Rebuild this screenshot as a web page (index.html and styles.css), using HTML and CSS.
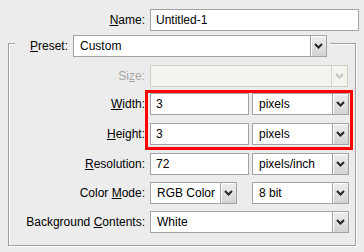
FILE: index.html
```html
<!DOCTYPE html>
<html lang="en">
<head>
    <meta charset="UTF-8">
    <title>New</title>
    <link rel="stylesheet" href="styles.css">
</head>
<body>
    <div class="dialog">
        <!-- Name -->
        <div class="row name-row">
            <label class="label" for="docName"><u>N</u>ame:</label>
            <input class="field field-name" type="text" id="docName" value="Untitled-1">
        </div>

        <!-- Image settings group -->
        <fieldset class="group">
            <legend class="preset">
                <div class="row">
                    <label class="preset-label"><u>P</u>reset:</label>
                    <div class="select select-preset">
                        <span class="value">Custom</span>
                        <span class="drop"><svg class="chev" width="9" height="6" viewBox="0 0 9 6"><path d="M1 1l3.5 3.5L8 1" /></svg></span>
                    </div>
                </div>
            </legend>

            <div class="row">
                <label class="label is-disabled">Si<u>z</u>e:</label>
                <div class="select select-size is-disabled">
                    <span class="value"></span>
                    <span class="drop"><svg class="chev" width="9" height="6" viewBox="0 0 9 6"><path d="M1 1l3.5 3.5L8 1" /></svg></span>
                </div>
            </div>

            <div class="dims">
                <div class="dims-labels">
                    <label class="dims-label" for="width"><u>W</u>idth:</label>
                    <label class="dims-label" for="height"><u>H</u>eight:</label>
                </div>
                <div class="highlight">
                    <div class="row">
                        <input class="field field-num" type="text" id="width" value="3">
                        <div class="select select-unit">
                            <span class="value">pixels</span>
                            <span class="drop"><svg class="chev" width="9" height="6" viewBox="0 0 9 6"><path d="M1 1l3.5 3.5L8 1" /></svg></span>
                        </div>
                    </div>
                    <div class="row">
                        <input class="field field-num" type="text" id="height" value="3">
                        <div class="select select-unit">
                            <span class="value">pixels</span>
                            <span class="drop"><svg class="chev" width="9" height="6" viewBox="0 0 9 6"><path d="M1 1l3.5 3.5L8 1" /></svg></span>
                        </div>
                    </div>
                </div>
            </div>

            <div class="row row-res">
                <label class="label" for="resolution"><u>R</u>esolution:</label>
                <input class="field field-num" type="text" id="resolution" value="72">
                <div class="select select-unit">
                    <span class="value">pixels/inch</span>
                    <span class="drop"><svg class="chev" width="9" height="6" viewBox="0 0 9 6"><path d="M1 1l3.5 3.5L8 1" /></svg></span>
                </div>
            </div>

            <div class="row row-next">
                <label class="label">Color <u>M</u>ode:</label>
                <div class="select select-mode">
                    <span class="value">RGB Color</span>
                    <span class="drop"><svg class="chev" width="9" height="6" viewBox="0 0 9 6"><path d="M1 1l3.5 3.5L8 1" /></svg></span>
                </div>
                <div class="select select-bits">
                    <span class="value">8 bit</span>
                    <span class="drop"><svg class="chev" width="9" height="6" viewBox="0 0 9 6"><path d="M1 1l3.5 3.5L8 1" /></svg></span>
                </div>
            </div>

            <div class="row row-next">
                <label class="label">Background <u>C</u>ontents:</label>
                <div class="select select-bg">
                    <span class="value">White</span>
                    <span class="drop"><svg class="chev" width="9" height="6" viewBox="0 0 9 6"><path d="M1 1l3.5 3.5L8 1" /></svg></span>
                </div>
            </div>
        </fieldset>
    </div>
</body>
</html>
```

FILE: styles.css
```css
body {
    margin: 0;
    background-color: #ececec;
    font-family: "Liberation Sans", Arial, sans-serif;
    font-size: 12px;
    color: #000;
}
.dialog {
    width: 364px;
    height: 252px;
    padding-top: 9px;
    box-sizing: border-box;
    overflow: hidden;
}
.row {
    display: flex;
    align-items: center;
    height: 22px;
}
.label {
    width: 130px;
    margin-right: 5px;
    text-align: right;
    white-space: nowrap;
}
.is-disabled.label {
    color: #a6a6a6;
}
.name-row {
    margin-left: 15px;
}

/* text boxes */
.field {
    box-sizing: border-box;
    height: 22px;
    margin: 0;
    padding: 0 5px;
    border: 1px solid #a3a3a3;
    background-color: #fff;
    font: inherit;
    color: #000;
    outline: none;
}
.field-name {
    width: 209px;
}
.field-num {
    width: 99px;
}

/* group box */
.group {
    width: 348px;
    box-sizing: border-box;
    margin: -1px 0 0 8px;
    padding: 8px 0 12px 6px;
    min-width: 0;
    border: 1px solid #a0a0a0;
    box-shadow: 1px 1px 0 #fff, inset 1px 1px 0 #fff;
}
.preset {
    padding: 5px 3px 0 15px;
    background-color: #ececec;
}
.preset-label {
    margin-right: 5px;
    white-space: nowrap;
}

/* drop-down lists */
.select {
    box-sizing: border-box;
    height: 22px;
    display: flex;
    align-items: stretch;
    border: 1px solid #a3a3a3;
    background-color: #fff;
}
.select .value {
    flex: 1;
    padding-left: 6px;
    line-height: 20px;
    white-space: nowrap;
    overflow: hidden;
}
.select .drop {
    width: 16px;
    box-sizing: border-box;
    display: flex;
    align-items: center;
    justify-content: center;
    border-left: 1px solid #a0a0a0;
    background: linear-gradient(#eeeeee, #d3d3d3);
    box-shadow: inset 1px 1px 0 #fff;
}
.chev path {
    fill: none;
    stroke: #262626;
    stroke-width: 2;
}
.select.is-disabled {
    border-color: #cfcfc5;
    background-color: #f4f3ee;
}
.select.is-disabled .drop {
    border-left-color: #d6d6cc;
    background: #f4f3ee;
    box-shadow: none;
}
.select.is-disabled .chev path {
    stroke: #c4c4c0;
}
.select-preset {
    width: 254px;
}
.select-size {
    width: 198px;
}
.select-unit {
    width: 97px;
    margin-left: 3px;
}
.select-mode {
    width: 87px;
}
.select-bits {
    width: 97px;
    margin-left: 15px;
}
.select-bg {
    width: 199px;
}

/* width / height with the red highlight */
.dims {
    display: flex;
    margin-top: 3px;
}
.dims-labels {
    width: 130px;
    padding-top: 3px;
    display: flex;
    flex-direction: column;
    gap: 8px;
}
.dims-label {
    height: 22px;
    line-height: 22px;
    text-align: right;
}
.highlight {
    border: 3px solid #ff0000;
    padding: 0 1px 2px 2px;
    display: flex;
    flex-direction: column;
    gap: 8px;
}
.row-res {
    margin-top: 3px;
}
.row-next {
    margin-top: 7px;
}
```
